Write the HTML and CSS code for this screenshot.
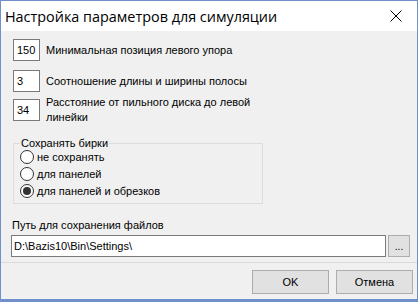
FILE: index.html
```html
<!DOCTYPE html>
<html lang="ru">
<head>
    <meta charset="UTF-8">
    <title>Настройка параметров для симуляции</title>
    <link rel="stylesheet" href="styles.css">
</head>
<body>
    <div class="dialog">
        <!-- Title bar -->
        <div class="titlebar">
            <span class="title">Настройка параметров для симуляции</span>
            <span class="close-btn">
                <svg width="12" height="12" viewBox="0 0 12 12">
                    <path d="M0.5 0.5 L11.5 11.5 M11.5 0.5 L0.5 11.5" stroke="#000" stroke-width="1" fill="none"/>
                </svg>
            </span>
        </div>

        <div class="content">
            <div class="field-row">
                <div class="num-input">150</div>
                <span class="field-label">Минимальная позиция левого упора</span>
            </div>
            <div class="field-row row-2">
                <div class="num-input">3</div>
                <span class="field-label">Соотношение длины и ширины полосы</span>
            </div>
            <div class="field-row row-3">
                <div class="num-input">34</div>
                <span class="field-label wrap">Расстояние от пильного диска до левой линейки</span>
            </div>

            <!-- Tag saving mode -->
            <fieldset class="group">
                <legend>Сохранять бирки</legend>
                <div class="radio-list">
                    <div class="radio-row"><span class="radio"></span>не сохранять</div>
                    <div class="radio-row"><span class="radio"></span>для панелей</div>
                    <div class="radio-row"><span class="radio checked"></span>для панелей и обрезков</div>
                </div>
            </fieldset>

            <div class="path-label">Путь для сохранения файлов</div>
            <div class="path-row">
                <div class="path-input">D:\Bazis10\Bin\Settings\</div>
                <div class="browse-btn">...</div>
            </div>
        </div>

        <div class="footer">
            <div class="btn">OK</div>
            <div class="btn">Отмена</div>
        </div>
    </div>
</body>
</html>
```

FILE: styles.css
```css
body {
    margin: 0;
    font-family: 'Liberation Sans', Arial, sans-serif;
    font-size: 11px;
    color: #000;
    background: #fff;
}

.dialog {
    width: 418px;
    height: 302px;
    box-sizing: border-box;
    border: 1px solid #6f90c8;
    border-bottom-width: 3px;
    display: flex;
    flex-direction: column;
    background: #f0f0f0;
}

.titlebar {
    height: 30px;
    background: #fff;
    display: flex;
    align-items: center;
    justify-content: space-between;
    padding-left: 4px;
}

.title {
    font-family: 'Open Sans', sans-serif;
    font-size: 14.4px;
}

.close-btn {
    width: 42px;
    height: 30px;
    display: flex;
    align-items: center;
    justify-content: center;
}

.content {
    height: 231px;
    box-sizing: border-box;
    padding: 8px 7px 0 11px;
}

.field-row {
    display: flex;
    align-items: center;
    gap: 6px;
    padding-left: 1px;
}

.row-2 {
    margin-top: 9px;
}

.row-3 {
    margin-top: 3px;
}

.num-input {
    width: 27px;
    height: 22px;
    box-sizing: border-box;
    border: 1px solid #7a7a7a;
    background: #fff;
    padding: 3px 0 0 3px;
    line-height: 15px;
}

.field-label {
    line-height: 15px;
}

.field-label.wrap {
    width: 215px;
}

.group {
    margin: 11px 0 0 1px;
    width: 250px;
    box-sizing: border-box;
    padding: 0 6px 4px 6px;
    border: 1px solid #dcdcdc;
}

.group legend {
    padding: 0 1px;
    line-height: 14px;
}

.radio-list {
    margin-top: -2px;
}

.radio-row {
    display: flex;
    align-items: center;
    gap: 3px;
    height: 17px;
}

.radio {
    width: 14px;
    height: 14px;
    box-sizing: border-box;
    border: 1px solid #333;
    border-radius: 50%;
    background: #fff;
    display: flex;
    align-items: center;
    justify-content: center;
}

.radio.checked::after {
    content: "";
    width: 8px;
    height: 8px;
    border-radius: 50%;
    background: #333;
}

.path-label {
    margin-top: 14px;
    line-height: 15px;
}

.path-row {
    display: flex;
    gap: 2px;
    margin-top: 2px;
}

.path-input {
    width: 376px;
    height: 22px;
    box-sizing: border-box;
    border: 1px solid #7a7a7a;
    background: #fff;
    padding: 3px 0 0 2px;
    line-height: 15px;
    margin-left: -1px;
}

.browse-btn {
    width: 22px;
    height: 22px;
    box-sizing: border-box;
    border: 1px solid #adadad;
    background: #e1e1e1;
    text-align: center;
    line-height: 22px;
    font-size: 10px;
}

.footer {
    flex: 1;
    border-top: 1px solid #dadada;
    display: flex;
    justify-content: flex-end;
    align-items: flex-start;
    gap: 7px;
    padding: 7px 4px 0 0;
}

.btn {
    width: 77px;
    height: 24px;
    box-sizing: border-box;
    border: 1px solid #adadad;
    background: #e1e1e1;
    text-align: center;
    line-height: 22px;
}
```
